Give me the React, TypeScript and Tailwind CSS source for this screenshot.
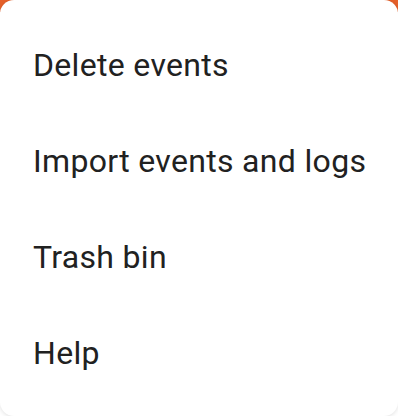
const items = ["Delete events", "Import events and logs", "Trash bin", "Help"];

export default function App() {
  return (
    <div className="relative w-[398px] h-[416px] bg-white overflow-hidden">
      {/* orange app bar peeking behind the menu */}
      <div className="absolute inset-x-0 top-0 h-[12px] bg-[#e5602a]" />
      <div className="absolute inset-0 rounded-[14px] bg-white shadow-[0_1px_4px_rgba(0,0,0,0.12)] pt-[17px] font-['Roboto',sans-serif] text-[#212121]">
        {items.map((label) => (
          <div key={label} className="h-[96px] flex items-center pl-[33px] text-[32px] tracking-[0.01em] leading-none">
            {label}
          </div>
        ))}
      </div>
    </div>
  );
}
